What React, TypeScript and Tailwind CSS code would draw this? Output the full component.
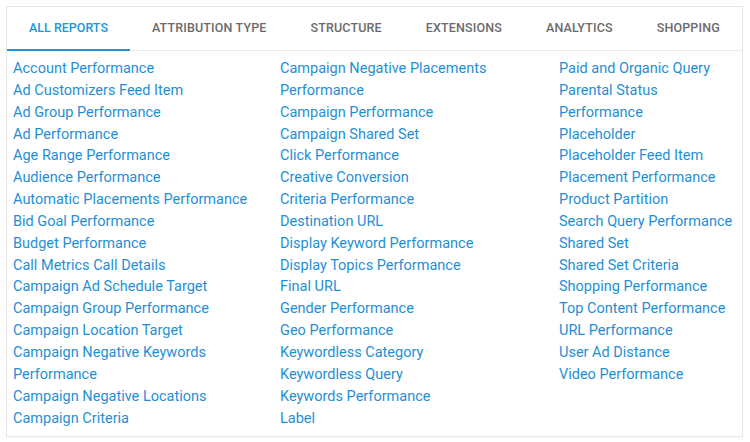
const tabs = ["All Reports", "Attribution Type", "Structure", "Extensions", "Analytics", "Shopping"];

const columns = [
  [
    "Account Performance",
    "Ad Customizers Feed Item",
    "Ad Group Performance",
    "Ad Performance",
    "Age Range Performance",
    "Audience Performance",
    "Automatic Placements Performance",
    "Bid Goal Performance",
    "Budget Performance",
    "Call Metrics Call Details",
    "Campaign Ad Schedule Target",
    "Campaign Group Performance",
    "Campaign Location Target",
    "Campaign Negative Keywords Performance",
    "Campaign Negative Locations",
    "Campaign Criteria",
  ],
  [
    "Campaign Negative Placements Performance",
    "Campaign Performance",
    "Campaign Shared Set",
    "Click Performance",
    "Creative Conversion",
    "Criteria Performance",
    "Destination URL",
    "Display Keyword Performance",
    "Display Topics Performance",
    "Final URL",
    "Gender Performance",
    "Geo Performance",
    "Keywordless Category",
    "Keywordless Query",
    "Keywords Performance",
    "Label",
  ],
  [
    "Paid and Organic Query",
    "Parental Status Performance",
    "Placeholder",
    "Placeholder Feed Item",
    "Placement Performance",
    "Product Partition",
    "Search Query Performance",
    "Shared Set",
    "Shared Set Criteria",
    "Shopping Performance",
    "Top Content Performance",
    "URL Performance",
    "User Ad Distance",
    "Video Performance",
  ],
];

export default function App() {
  return (
    <div className="min-h-screen bg-white p-[6px] font-['Roboto',sans-serif]">
      <div className="w-[737px] h-[431px] border border-[#e6e6e6] bg-white">
        {/* Tabs */}
        <div className="flex h-[44px] border-b border-[#ececec]">
          {tabs.map((t, i) => (
            <div
              key={t}
              className={
                i === 0
                  ? "flex items-center px-[22px] text-[12.5px] font-medium uppercase text-[#2196d6] border-b-2 border-[#2196d6] -mb-px"
                  : "flex items-center px-[22px] text-[12.5px] tracking-[0.15px] font-medium uppercase text-[#6b6b6b]"
              }
            >
              {t}
            </div>
          ))}
        </div>

        {/* Report links */}
        <div className="grid grid-cols-[267px_279px_1fr] pl-[6px] pt-[7px] text-[14.5px] leading-[21.85px] text-[#1f8fd4]">
          {columns.map((col, i) => (
            <ul key={i} className={i < 2 ? "pr-4" : ""}>
              {col.map((r) => (
                <li key={r} className="cursor-pointer hover:underline">
                  {r}
                </li>
              ))}
            </ul>
          ))}
        </div>
      </div>
    </div>
  );
}
